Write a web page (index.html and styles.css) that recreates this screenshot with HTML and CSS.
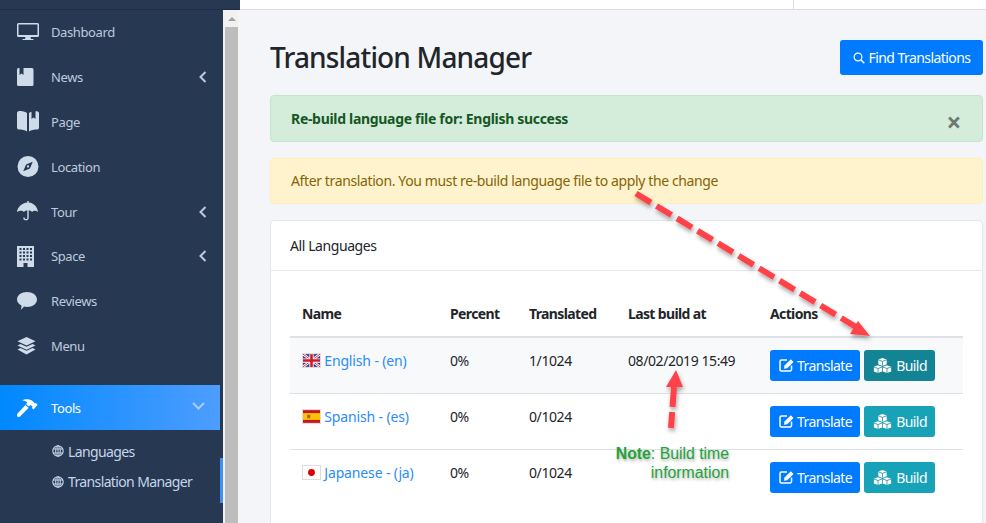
FILE: index.html
```html
<!DOCTYPE html>
<html lang="en">
<head>
    <meta charset="UTF-8">
    <meta name="viewport" content="width=device-width, initial-scale=1.0">
    <title>Translation Manager</title>
    <link rel="stylesheet" href="styles.css">
</head>
<body>
    <svg width="0" height="0" class="defs">
        <symbol id="i-globe" viewBox="0 0 12 12">
            <circle cx="6" cy="6" r="5.2" fill="none" stroke="currentColor" stroke-width="1.1"/>
            <ellipse cx="6" cy="6" rx="2.3" ry="5.2" fill="none" stroke="currentColor" stroke-width="1"/>
            <path d="M1 4h10M1 8h10M6 1v10" stroke="currentColor" stroke-width="1"/>
        </symbol>
        <symbol id="i-edit" viewBox="0 0 16 14">
            <path d="M12.5 7.5v4a1.5 1.5 0 0 1-1.5 1.5H2.5A1.5 1.5 0 0 1 1 11.500V3.500A1.500 1.500 0 0 1 2.500 2H8" fill="none" stroke="currentColor" stroke-width="1.500"/>
            <path d="M5.500 7.500 11.800 1.200l2.700 2.700-6.300 6.300-3.300.6z" fill="currentColor"/>
        </symbol>
        <symbol id="i-cubes" viewBox="0 0 20 16">
            <path d="M10 0l4.500 1.700v5L10 8.400 5.500 6.700v-5z" fill="currentColor"/>
            <path d="M5.200 7.800l4.400 1.600v4.900L5.200 16 .8 14.300V9.400z" fill="currentColor"/>
            <path d="M14.800 7.800l4.400 1.600v4.900L14.800 16l-4.400-1.700V9.400z" fill="currentColor"/>
            <path d="M5.500 1.900 10 3.600l4.500-1.700M10 3.600v4.600M.8 9.600l4.400 1.600 4.400-1.600M5.200 11.200V16M10.400 9.600l4.400 1.600 4.400-1.600M14.800 11.200V16" fill="none" stroke="#12808f" stroke-width=".8"/>
        </symbol>
    </svg>

    <div class="app">
        <div class="side-wrap">
            <div class="side-top"></div>
            <div class="side-row">
                <aside class="sidebar">
                    <nav class="menu">
                        <a class="menu-item">
                            <svg class="menu-icon" viewBox="0 0 22 18"><path fill-rule="evenodd" d="M1.500 0h19A1.500 1.500 0 0 1 22 1.500v11a1.500 1.500 0 0 1-1.500 1.500h-7l.5 2h2.500v1h-11v-1H8l.5-2h-7A1.500 1.500 0 0 1 0 12.500v-11A1.500 1.500 0 0 1 1.500 0zM1.500 1.500v10.500h19V1.500z"/></svg>
                            <span>Dashboard</span>
                        </a>
                        <a class="menu-item">
                            <svg class="menu-icon" viewBox="0 0 22 18"><path fill-rule="evenodd" d="M1.500 0H15v0A1.500 1.500 0 0 1 16.500 1.500v15a1.500 1.500 0 0 1-1.500 1.500H1.500A1.500 1.500 0 0 1 0 16.500v-15A1.500 1.500 0 0 1 1.500 0zM2.500 0v7l2-1.500 2 1.500V0z"/></svg>
                            <span>News</span>
                            <svg class="chevron" viewBox="0 0 8 12"><path d="M6.500 1 1.500 6l5 5" fill="none" stroke="currentColor" stroke-width="2"/></svg>
                        </a>
                        <a class="menu-item">
                            <svg class="menu-icon tall" viewBox="0 0 22 21"><path d="M2 0c3 0 6 .5 8 2v18.500C8 19 5 18.500 2 18.500c-1 0-2-.5-2-2V2C0 1 1 0 2 0z"/><path d="M12 2c.8-.6 1.500-1 2.500-1.300V8l2-1.500 2 1.500V.2H20c1 0 2 1 2 2v14.300c0 1.500-1 2-2 2-3 0-6 .5-8 2z"/></svg>
                            <span>Page</span>
                        </a>
                        <a class="menu-item">
                            <svg class="menu-icon tall" viewBox="0 0 22 22"><path fill-rule="evenodd" d="M11 0a11 11 0 1 1 0 22 11 11 0 0 1 0-22zM16 6l-7 3-3 7 7-3z"/><circle cx="11" cy="11" r="1.200"/></svg>
                            <span>Location</span>
                        </a>
                        <a class="menu-item">
                            <svg class="menu-icon tall" viewBox="0 0 22 21"><path d="M10.300 0h1.400v1.500C17 2 20.500 6 21 11c-1-1-2.300-1.300-3.200-1.300S15.800 10 15 11c-.7-1-2-1.400-3.300-1.400v7.400c0 2.800-5 3.300-5.500.2-.1-.8 1.400-1 1.500-.2.200 1.500 2.600 1.200 2.600 0V9.600C9 9.600 7.700 10 7 11c-.8-1-2-1.300-3-1.300S1 10 0 11C.5 6 5 2 10.300 1.500z"/></svg>
                            <span>Tour</span>
                            <svg class="chevron" viewBox="0 0 8 12"><path d="M6.500 1 1.500 6l5 5" fill="none" stroke="currentColor" stroke-width="2"/></svg>
                        </a>
                        <a class="menu-item">
                            <svg class="menu-icon tall" viewBox="0 0 22 21"><path fill-rule="evenodd" d="M0 0h17v21h-6.500v-4h-4v4H0zM2.500 2v2h2V2zm3.500 0v2h2V2zm3.500 0v2h2V2zm3.500 0v2h2V2zM2.500 5.500v2h2v-2zm3.500 0v2h2v-2zm3.500 0v2h2v-2zm3.500 0v2h2v-2zM2.500 9v2h2V9zM6 9v2h2V9zm3.500 0v2h2V9zM13 9v2h2V9zM2.500 12.500v2h2v-2zm3.500 0v2h2v-2zm3.500 0v2h2v-2zm3.500 0v2h2v-2z"/></svg>
                            <span>Space</span>
                            <svg class="chevron" viewBox="0 0 8 12"><path d="M6.500 1 1.500 6l5 5" fill="none" stroke="currentColor" stroke-width="2"/></svg>
                        </a>
                        <a class="menu-item">
                            <svg class="menu-icon" viewBox="0 0 22 18"><path d="M10 0c5.500 0 10 3 10 7.500S15.500 15 10 15c-1 0-2-.1-3-.4C6 16 4.500 17.500 3.500 18c.5-1 1-2.500 1-4.500C2 12.300 0 10.200 0 7.500 0 3 4.500 0 10 0z"/></svg>
                            <span>Reviews</span>
                        </a>
                        <a class="menu-item">
                            <svg class="menu-icon" viewBox="0 0 22 18"><path d="M9.500 0 18.500 4.200 9.500 8.500.500 4.200z"/><path d="M3.500 7 9.500 9.800 15.500 7l3 1.500-9 4.300-9-4.300z"/><path d="M3.500 11 9.500 13.800 15.500 11l3 1.500-9 5-9-5z"/></svg>
                            <span>Menu</span>
                        </a>
                    </nav>

                    <a class="menu-item active">
                        <svg class="menu-icon" viewBox="0 0 22 18"><path d="M5 1.500C8-.5 13 0 15.500 2L18 4.500l1-.5 1.500 2-4 4.500L15 9l.5-1.500-2-1.500-2 1.500L9 5l1.500-1.500C9 2 7 1.500 5 1.500z"/><path d="M8.500 6l3 3L3 17.500c-1 .8-2 .5-2.500 0L0 17c-.2-1 0-1.500.5-2.500z"/></svg>
                        <span>Tools</span>
                        <svg class="chevron-down" viewBox="0 0 13 8"><path d="M1 1l5.500 5.500L12 1" fill="none" stroke="currentColor" stroke-width="2"/></svg>
                    </a>

                    <ul class="submenu">
                        <li class="submenu-item">
                            <svg class="globe"><use href="#i-globe"/></svg>
                            <span>Languages</span>
                        </li>
                        <li class="submenu-item current">
                            <svg class="globe"><use href="#i-globe"/></svg>
                            <span>Translation Manager</span>
                        </li>
                    </ul>
                </aside>

                <div class="scrollbar">
                    <div class="scroll-up"></div>
                    <div class="scroll-thumb"></div>
                </div>
            </div>
        </div>

        <main class="main">
            <div class="topbar"><div class="topbar-cell"></div></div>

            <div class="content">
                <div class="page-head">
                    <h1>Translation Manager</h1>
                    <button class="btn btn-primary btn-find">
                        <svg class="search-icon" viewBox="0 0 12 12"><circle cx="5" cy="5" r="3.900" fill="none" stroke="currentColor" stroke-width="1.200"/><path d="M8 8l3.300 3.300" stroke="currentColor" stroke-width="1.400"/></svg>
                        Find Translations
                    </button>
                </div>

                <div class="alert alert-success">
                    <strong>Re-build language file for: English success</strong>
                    <span class="alert-close">&times;</span>
                </div>
                <div class="alert alert-warning">After translation. You must re-build language file to apply the change</div>

                <section class="card">
                    <div class="card-header">All Languages</div>
                    <div class="card-body">
                        <table class="lang-table">
                            <colgroup>
                                <col class="col-name">
                                <col class="col-percent">
                                <col class="col-translated">
                                <col class="col-build">
                                <col>
                            </colgroup>
                            <thead>
                                <tr>
                                    <th>Name</th>
                                    <th>Percent</th>
                                    <th>Translated</th>
                                    <th>Last build at</th>
                                    <th>Actions</th>
                                </tr>
                            </thead>
                            <tbody>
                                <tr class="hovered">
                                    <td>
                                        <svg class="flag" viewBox="0 0 20 15">
                                            <rect width="20" height="15" fill="#2b3f86"/>
                                            <path d="M0 0l20 15M20 0L0 15" stroke="#fff" stroke-width="3"/>
                                            <path d="M0 0l20 15M20 0L0 15" stroke="#d0172b" stroke-width="1"/>
                                            <path d="M10 0v15M0 7.500h20" stroke="#fff" stroke-width="5"/>
                                            <path d="M10 0v15M0 7.500h20" stroke="#d0172b" stroke-width="3"/>
                                        </svg>
                                        <a class="lang-link">English - (en)</a>
                                    </td>
                                    <td>0%</td>
                                    <td>1/1024</td>
                                    <td>08/02/2019 15:49</td>
                                    <td class="actions">
                                        <div class="action-group">
                                            <button class="btn btn-primary"><svg class="btn-icon"><use href="#i-edit"/></svg>Translate</button>
                                            <button class="btn btn-info pressed"><svg class="btn-icon wide"><use href="#i-cubes"/></svg>Build</button>
                                        </div>
                                    </td>
                                </tr>
                                <tr>
                                    <td>
                                        <svg class="flag" viewBox="0 0 20 15">
                                            <rect width="20" height="15" fill="#c8151b"/>
                                            <rect y="3.500" width="20" height="8" fill="#fac400"/>
                                            <rect x="5" y="5.500" width="3.500" height="4" fill="#b0552a"/>
                                        </svg>
                                        <a class="lang-link">Spanish - (es)</a>
                                    </td>
                                    <td>0%</td>
                                    <td>0/1024</td>
                                    <td></td>
                                    <td class="actions">
                                        <div class="action-group">
                                            <button class="btn btn-primary"><svg class="btn-icon"><use href="#i-edit"/></svg>Translate</button>
                                            <button class="btn btn-info"><svg class="btn-icon wide"><use href="#i-cubes"/></svg>Build</button>
                                        </div>
                                    </td>
                                </tr>
                                <tr>
                                    <td>
                                        <svg class="flag" viewBox="0 0 20 15">
                                            <rect width="20" height="15" fill="#fff"/>
                                            <circle cx="10" cy="7.500" r="4" fill="#d80000"/>
                                        </svg>
                                        <a class="lang-link">Japanese - (ja)</a>
                                    </td>
                                    <td>0%</td>
                                    <td>0/1024</td>
                                    <td></td>
                                    <td class="actions">
                                        <div class="action-group">
                                            <button class="btn btn-primary"><svg class="btn-icon"><use href="#i-edit"/></svg>Translate</button>
                                            <button class="btn btn-info"><svg class="btn-icon wide"><use href="#i-cubes"/></svg>Build</button>
                                        </div>
                                    </td>
                                </tr>
                            </tbody>
                        </table>
                    </div>
                </section>
            </div>
        </main>
    </div>

    <!-- Red arrows and note drawn on top of the screenshot -->
    <svg class="markup" width="986" height="523" viewBox="0 0 986 523">
        <defs>
            <filter id="soft" x="-10%" y="-10%" width="130%" height="130%">
                <feDropShadow dx="1" dy="3" stdDeviation="2" flood-color="#000" flood-opacity=".35"/>
            </filter>
        </defs>
        <g filter="url(#soft)">
            <path d="M636 193.500 856 327" fill="none" stroke="#ff4249" stroke-width="6" stroke-dasharray="17.500 6.500"/>
            <path d="M870 336 850 334 858 321z" fill="#ff4249"/>
            <path d="M674 387 671 428" fill="none" stroke="#ff4249" stroke-width="6" stroke-dasharray="20 5"/>
            <path d="M676 370 683 387 666 387z" fill="#ff4249"/>
        </g>
    </svg>
    <div class="note"><b>Note</b>: Build time<br>information</div>
</body>
</html>
```

FILE: styles.css
```css
/* Basic reset */
* {
    box-sizing: border-box;
}

html, body {
    height: 100%;
}

body {
    margin: 0;
    overflow: hidden;
    font-family: "Noto Sans", Arial, sans-serif;
    font-size: 14px;
    letter-spacing: -0.03em;
    color: #212529;
    background-color: #f4f5f8;
}

.defs {
    display: block;
}

.app {
    display: flex;
    height: 523px;
}

/* Left column: dark strip on top, sidebar and page scrollbar below */
.side-wrap {
    width: 240px;
    flex-shrink: 0;
    display: flex;
    flex-direction: column;
    background-color: #f4f5f8;
}

.side-top {
    height: 10px;
    flex-shrink: 0;
    background-color: #263852;
    border-bottom: 1px solid #1f2c42;
}

.side-row {
    flex: 1;
    display: flex;
    min-height: 0;
}

/* Sidebar */
.sidebar {
    width: 223px;
    flex-shrink: 0;
    background-color: #263852;
}

.menu {
    display: flex;
    flex-direction: column;
    margin-bottom: 16px;
    height: 359px;
}

.menu-item {
    display: flex;
    align-items: center;
    height: 44.800px;
    padding: 0 17px;
    color: #bfcbdc;
    font-size: 13px;
    letter-spacing: -0.03em;
}

.menu-item span {
    flex: 1;
}

.menu-icon {
    width: 22px;
    height: 18px;
    margin-right: 12px;
    fill: #cfdbe8;
    flex-shrink: 0;
}

.menu-icon.tall {
    height: 21px;
}

.chevron {
    width: 8px;
    height: 12px;
    margin-right: -1px;
    color: #bfcbdc;
}

.menu-item.active {
    width: 220px;
    height: 45px;
    color: #fff;
    background: linear-gradient(to right, #0088ff, #4d9dff);
}

.menu-item.active .menu-icon {
    fill: #fff;
}

.chevron-down {
    width: 13px;
    height: 8px;
    margin-right: -2px;
    margin-top: -3px;
    color: #a9cdf5;
}

.submenu {
    list-style: none;
    margin: 0;
    padding: 0;
}

.submenu-item {
    display: flex;
    align-items: center;
    gap: 4px;
    height: 28px;
    padding: 14px 0 0 52px;
    color: #c7d6ea;
    letter-spacing: -0.045em;
}

.submenu-item.current {
    height: 45px;
    padding-top: 2px;
    border-right: 3px solid #3f8ff5;
}

.globe {
    width: 12px;
    height: 12px;
}

/* Fake browser scrollbar */
.scrollbar {
    width: 15px;
    flex-shrink: 0;
    border-left: 2px solid #f1f1f1;
    background-color: #f1f1f1;
    display: flex;
    flex-direction: column;
}

.scroll-up {
    height: 17px;
    display: flex;
    justify-content: center;
    align-items: center;
}

.scroll-up::before {
    content: "";
    border-left: 4px solid transparent;
    border-right: 4px solid transparent;
    border-bottom: 4px solid #a3a3a3;
}

.scroll-thumb {
    flex: 1;
    background-color: #bdbdbd;
}

/* Main area */
.main {
    flex: 1;
    min-width: 0;
}

.topbar {
    height: 10px;
    background-color: #fff;
    border-bottom: 1px solid #dcdcdc;
    display: flex;
    justify-content: flex-end;
}

.topbar-cell {
    width: 193px;
    border-left: 1px solid #dcdcdc;
}

.content {
    padding: 30px 3px 0 30px;
}

.page-head {
    display: flex;
    justify-content: space-between;
    align-items: center;
    height: 35px;
    margin-bottom: 20px;
}

h1 {
    margin: -2px 0 0;
    font-size: 28px;
    font-weight: 500;
    letter-spacing: -0.03em;
    color: #212529;
}

.btn {
    display: inline-flex;
    align-items: center;
    height: 31px;
    padding: 0 8px 0 9px;
    border: 0;
    border-radius: 3px;
    font-family: inherit;
    font-size: 14px;
    letter-spacing: -0.04em;
    color: #fff;
}

.btn-primary {
    background-color: #007bff;
}

.btn-info {
    background-color: #17a2b8;
}

.btn-info.pressed {
    background-color: #138496;
}

.btn-find {
    height: 35px;
    width: 143px;
    justify-content: center;
}

.search-icon {
    width: 12px;
    height: 12px;
    margin-right: 3px;
}

.btn-icon {
    width: 16px;
    height: 14px;
    margin-right: 2px;
}

.btn-icon.wide {
    width: 19px;
    height: 15px;
    margin-right: 4px;
}

/* Alerts */
.alert {
    display: flex;
    align-items: center;
    justify-content: space-between;
    padding: 0 20px;
    border: 1px solid;
    border-radius: 4px;
    margin-bottom: 16px;
    letter-spacing: -0.027em;
}

.alert-success {
    height: 47px;
    padding-bottom: 1px;
    color: #155724;
    background-color: #d4edda;
    border-color: #c3e6cb;
    letter-spacing: -0.022em;
}

.alert-close {
    margin: 8px 1px 0 0;
    font-size: 26px;
    font-weight: 700;
    color: #6c7a70;
    line-height: 1;
}

.alert-warning {
    height: 46px;
    padding-bottom: 2px;
    color: #856404;
    background-color: #fff3cd;
    border-color: #ffeeba;
}

/* Card with the table */
.card {
    background-color: #fff;
    border: 1px solid #e3e6ea;
    border-radius: 4px;
}

.card-header {
    height: 50px;
    display: flex;
    align-items: center;
    padding-left: 19px;
    border-bottom: 1px solid #e3e6ea;
}

.card-body {
    padding: 23px 19px 30px;
}

.lang-table {
    width: 100%;
    table-layout: fixed;
    border-collapse: collapse;
}

.col-name {
    width: 148px;
}

.col-percent {
    width: 79px;
}

.col-translated {
    width: 99px;
}

.col-build {
    width: 142px;
}

.lang-table th {
    height: 43px;
    padding: 0 0 3px 12px;
    text-align: left;
    font-weight: 700;
    letter-spacing: -0.045em;
    border-bottom: 2px solid #dee2e6;
}

.lang-table td {
    height: 56px;
    padding: 0 0 9px 12px;
    border-bottom: 1px solid #dee2e6;
}

.lang-table tbody tr:last-child td {
    border-bottom: 0;
}

.lang-table tr.hovered td {
    background-color: #f8f9fb;
}

.lang-table td.actions {
    padding-top: 0;
    padding-bottom: 0;
}

.action-group {
    display: flex;
    gap: 4px;
}

.flag {
    width: 19px;
    height: 15px;
    vertical-align: -2px;
    border: 1px solid #ddd;
}

.lang-link {
    color: #2a8bff;
    letter-spacing: -0.01em;
}

/* Markup on top of the page */
.markup {
    position: absolute;
    left: 0;
    top: 0;
    pointer-events: none;
}

.note {
    position: absolute;
    left: 606px;
    top: 444px;
    width: 123px;
    text-align: right;
    white-space: nowrap;
    font-family: "Liberation Sans", Arial, sans-serif;
    font-size: 15.800px;
    letter-spacing: 0;
    line-height: 19px;
    color: #22a338;
    text-shadow: 1px 2px 3px rgba(0, 0, 0, 0.3);
}
```
